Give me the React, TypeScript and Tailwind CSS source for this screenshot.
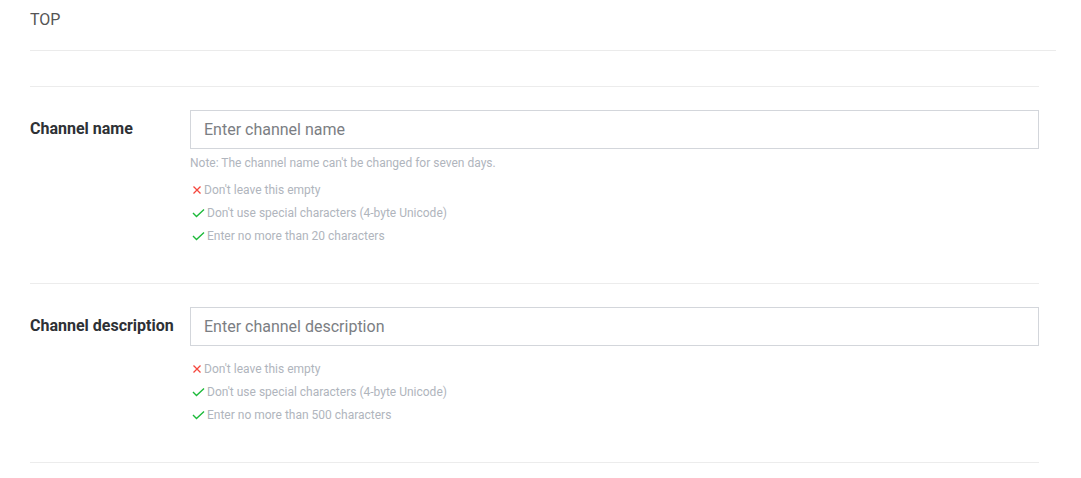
import React from "react";

function XIcon() {
  return (
    <svg width="10" height="10" viewBox="0 0 10 10" className="mr-[2px] shrink-0">
      <path d="M1.5 1.5 L8.5 8.5 M8.5 1.5 L1.5 8.5" stroke="#f5463c" strokeWidth="1.3" fill="none" />
    </svg>
  );
}

function CheckIcon() {
  return (
    <svg width="13" height="10" viewBox="0 0 13 10" className="mr-[2px] shrink-0">
      <path d="M1 5 L4.5 8.5 L12 1.5" stroke="#1dba3a" strokeWidth="1.4" fill="none" />
    </svg>
  );
}

function Rule({ ok, text }: { ok: boolean; text: string }) {
  return (
    <div className="flex h-[23px] items-center text-[12px] text-[#b0b5bd]">
      {ok ? <CheckIcon /> : <XIcon />}
      <span>{text}</span>
    </div>
  );
}

function Row({
  label,
  placeholder,
  note,
  max,
}: {
  label: string;
  placeholder: string;
  note?: string;
  max: number;
}) {
  return (
    <div className="flex border-b border-[#ececec] pt-[23px] pb-[36px]">
      <div className="flex h-[38px] w-[160px] shrink-0 items-center text-[16px] font-bold text-[#2e3135]">
        {label}
      </div>
      <div className="flex-1">
        <input
          className="block h-[39px] w-full border border-[#d3d6db] px-[13px] pb-[1px] text-[16px] text-[#333] outline-none placeholder:text-[#7b7e83]"
          placeholder={placeholder}
        />
        {note ? (
          <div className="mt-[6px] text-[12px] leading-[16px] text-[#b0b5bd]">{note}</div>
        ) : null}
        <div className={note ? "mt-[7px] pl-[2px]" : "mt-[11px] pl-[2px]"}>
          <Rule ok={false} text="Don't leave this empty" />
          <Rule ok={true} text="Don't use special characters (4-byte Unicode)" />
          <Rule ok={true} text={`Enter no more than ${max} characters`} />
        </div>
      </div>
    </div>
  );
}

export default function App() {
  return (
    <div
      className="min-h-[478px] bg-white pl-[30px] pr-[25px]"
      style={{ fontFamily: "Roboto, 'Noto Sans', 'Liberation Sans', sans-serif" }}
    >
      <div className="h-[51px] border-b border-[#ebebeb] pt-[10px] text-[16px] leading-5 text-[#555]">
        TOP
      </div>
      <div className="mr-[17px]">
        <div className="h-[36px] border-b border-[#ececec]" />
        <Row
          label="Channel name"
          placeholder="Enter channel name"
          note="Note: The channel name can't be changed for seven days."
          max={20}
        />
        <Row label="Channel description" placeholder="Enter channel description" max={500} />
      </div>
    </div>
  );
}
